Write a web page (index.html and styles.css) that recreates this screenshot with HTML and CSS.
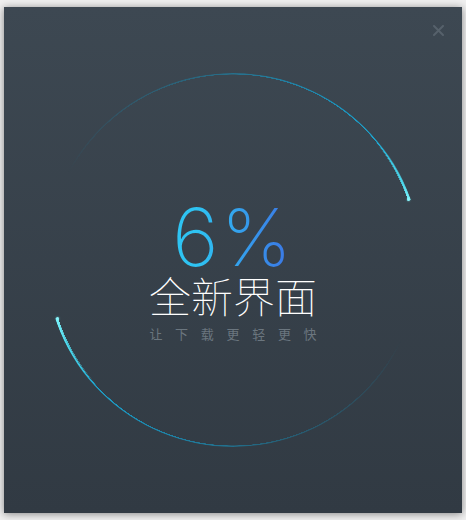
FILE: index.html
```html
<!DOCTYPE html>
<html>
  <head>
    <meta charset="UTF-8" />
    <title>全新界面</title>
    <link rel="stylesheet" href="styles.css">
  </head>
  <body>
    <div class="window">
      <a href="#" class="close" title="关闭">
        <svg width="11" height="11" viewBox="0 0 11 11">
          <path d="M1 1 L10 10 M10 1 L1 10" stroke="#56616b" stroke-width="2" stroke-linecap="round" />
        </svg>
      </a>
      <div class="stage">
        <div class="ring"></div>
        <div class="ring ring-tip"></div>
        <span class="tip tip-a"></span>
        <span class="tip tip-b"></span>
        <div class="progress">
          <div class="percent">6%</div>
          <div class="title">全新界面</div>
          <div class="subtitle">让下载更轻更快</div>
        </div>
      </div>
    </div>
  </body>
</html>
```

FILE: styles.css
```css
html, body {
  margin: 0;
  padding: 0;
}
body {
  padding: 7px 4px;
  background-color: #f0f0f0;
  font-family: Inter, "Noto Sans CJK SC", sans-serif;
}
.window {
  position: relative;
  width: 458px;
  height: 506px;
  background: linear-gradient(to bottom, #3d4852, #313a43);
  box-shadow: 0 1px 8px rgba(0, 0, 0, 0.45);
  display: flex;
  flex-direction: column;
  align-items: center;
}
.close {
  position: absolute;
  top: 18px;
  right: 18px;
  width: 11px;
  height: 11px;
  display: block;
}
.close svg {
  display: block;
}
.stage {
  position: relative;
  margin-top: 66px;
  width: 374px;
  height: 374px;
}
.ring {
  position: absolute;
  inset: 0;
  border-radius: 50%;
  background: conic-gradient(from -62deg,
    rgba(20, 130, 170, 0) 0deg,
    rgba(22, 140, 180, 0.45) 50deg,
    rgba(24, 155, 200, 0.85) 95deg,
    #1ea8d2 115deg,
    #3fd6ee 128deg,
    #6ef0f8 133deg,
    transparent 133deg,
    rgba(20, 130, 170, 0) 177.6deg,
    rgba(22, 140, 180, 0.45) 227.6deg,
    rgba(24, 155, 200, 0.85) 272.6deg,
    #1ea8d2 292.6deg,
    #3fd6ee 305.8deg,
    #6ef0f8 313.8deg,
    transparent 313.8deg);
  -webkit-mask: radial-gradient(farthest-side, transparent calc(100% - 1.6px), #000 calc(100% - 1.4px));
  mask: radial-gradient(farthest-side, transparent calc(100% - 1.6px), #000 calc(100% - 1.4px));
}
.ring-tip {
  inset: -0.5px;
  background: conic-gradient(from -62deg,
    transparent 0deg,
    transparent 112deg,
    rgba(80, 220, 240, 0.8) 128deg,
    #7af2fa 133deg,
    transparent 133deg,
    transparent 289.8deg,
    rgba(80, 220, 240, 0.8) 305.8deg,
    #7af2fa 313.8deg,
    transparent 313.8deg);
  -webkit-mask: radial-gradient(farthest-side, transparent calc(100% - 3px), #000 calc(100% - 2.8px));
  mask: radial-gradient(farthest-side, transparent calc(100% - 3px), #000 calc(100% - 2.8px));
}
.tip {
  position: absolute;
  width: 3px;
  height: 3px;
  border-radius: 50%;
  background-color: #8af4fa;
  box-shadow: 0 0 2px rgba(110, 240, 248, 0.8);
}
.tip-a {
  left: 361px;
  top: 125px;
}
.tip-b {
  left: 10px;
  top: 244px;
}
.progress {
  position: relative;
  padding-top: 129px;
  display: flex;
  flex-direction: column;
  align-items: center;
}
.percent {
  font-family: Inter, sans-serif;
  font-weight: 200;
  font-size: 80px;
  line-height: 70px;
  letter-spacing: 2px;
  background: linear-gradient(to right, #2ec4f3 20%, #3a7de6 90%);
  -webkit-background-clip: text;
  background-clip: text;
  color: transparent;
}
.title {
  font-family: "Noto Sans CJK SC", sans-serif;
  font-weight: 100;
  font-size: 42px;
  line-height: 46px;
  color: #fff;
}
.subtitle {
  margin-top: 7px;
  padding-left: 12.7px;
  font-family: "Noto Sans CJK SC", sans-serif;
  font-size: 13px;
  line-height: 18px;
  letter-spacing: 12.7px;
  color: #6b767f;
}
```
